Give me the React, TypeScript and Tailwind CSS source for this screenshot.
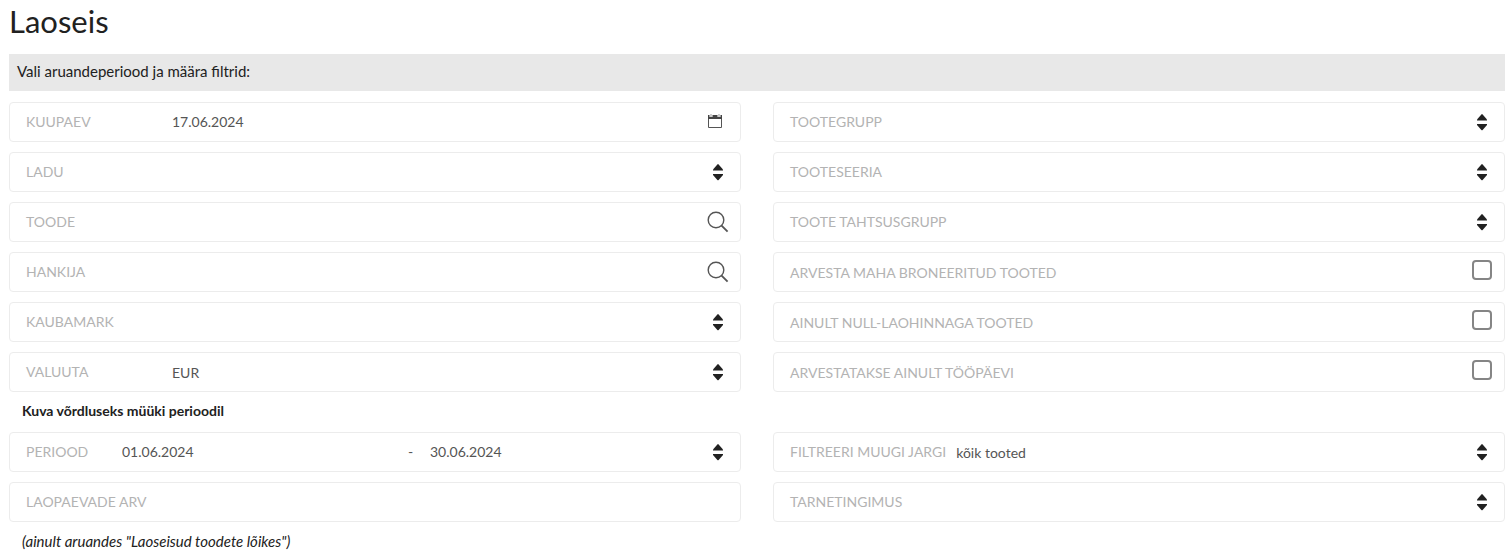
import { ReactNode, useState } from "react";

type FieldKind = "date" | "select" | "search" | "checkbox" | "text";

interface Field {
  id: string;
  label: string;
  kind: FieldKind;
  value?: string;
}

// Left and right column alternate, row by row
const FILTERS: Field[] = [
  { id: "date",         label: "KUUPAEV",                    kind: "date", value: "17.06.2024" },
  { id: "group",        label: "TOOTEGRUPP",                 kind: "select" },
  { id: "warehouse",    label: "LADU",                       kind: "select" },
  { id: "series",       label: "TOOTESEERIA",                kind: "select" },
  { id: "product",      label: "TOODE",                      kind: "search" },
  { id: "priority",     label: "TOOTE TAHTSUSGRUPP",         kind: "select" },
  { id: "supplier",     label: "HANKIJA",                    kind: "search" },
  { id: "reserved",     label: "ARVESTA MAHA BRONEERITUD TOOTED", kind: "checkbox" },
  { id: "brand",        label: "KAUBAMARK",                  kind: "select" },
  { id: "zeroPrice",    label: "AINULT NULL-LAOHINNAGA TOOTED", kind: "checkbox" },
  { id: "currency",     label: "VALUUTA",                    kind: "select", value: "EUR" },
  { id: "workdays",     label: "ARVESTATAKSE AINULT TÖÖPÄEVI", kind: "checkbox" },
];

function SortArrows() {
  return (
    <svg width="12" height="18" viewBox="0 0 12 18" className="shrink-0 pointer-events-none" fill="#212121" aria-hidden="true">
      <path d="M1 7.5 L1 6.5 L5.4 1.4 Q6 .8 6.6 1.4 L11 6.5 L11 7.5 Z" />
      <path d="M1 11 L1 12 L5.4 17 Q6 17.6 6.6 17 L11 12 L11 11 Z" />
    </svg>
  );
}

function CalendarIcon() {
  return (
    <svg width="16" height="16" viewBox="0 0 16 16" fill="none" aria-hidden="true">
      <path d="M1.5 2.5h13v12h-13z" stroke="#555" />
      <path d="M1 2h14v4H1z" fill="#444" />
      <path d="M4 0v4M12 0v4" stroke="#fff" strokeWidth="3" />
      <path d="M4 1v3M12 1v3" stroke="#999" />
    </svg>
  );
}

function SearchIcon() {
  return (
    <svg width="22" height="22" viewBox="0 0 22 22" fill="none" stroke="#555" aria-hidden="true">
      <circle cx="9" cy="9" r="7.8" strokeWidth="1.4" />
      <path d="M14.6 14.6 L20.6 20.6" strokeWidth="1.8" />
    </svg>
  );
}

function Row({ children }: { children: ReactNode }) {
  return (
    <div className="flex items-center h-10 px-4 border border-[#ececec] rounded">
      {children}
    </div>
  );
}

function Label({ id, text, narrow }: { id: string; text: string; narrow?: boolean }) {
  return (
    <label
      htmlFor={id}
      className={`shrink-0 pb-0.5 whitespace-nowrap text-[#b3b3b3] ${
        narrow ? "w-24" : "min-w-[146px] pr-2.5"
      }`}
    >
      {text}
    </label>
  );
}

const control = "flex-1 min-w-0 h-8 bg-transparent text-[#555] outline-none";

function SelectField({ id, label, value = "" }: { id: string; label: string; value?: string }) {
  return (
    <Row>
      <Label id={id} text={label} />
      <select id={id} defaultValue={value} className={`${control} appearance-none`}>
        <option value={value}>{value}</option>
      </select>
      <SortArrows />
    </Row>
  );
}

function CheckboxField({ id, label }: { id: string; label: string }) {
  const [checked, setChecked] = useState(false);
  return (
    <Row>
      <label htmlFor={id} className="flex-1 text-[#b3b3b3]">{label}</label>
      <input
        id={id}
        type="checkbox"
        checked={checked}
        onChange={(e) => setChecked(e.target.checked)}
        className="appearance-none size-5 -mr-1 mb-1 border-2 border-[#858585] rounded checked:bg-[#555]"
      />
    </Row>
  );
}

function FilterField({ id, label, kind, value }: Field) {
  if (kind === "select") return <SelectField id={id} label={label} value={value} />;
  if (kind === "checkbox") return <CheckboxField id={id} label={label} />;
  return (
    <Row>
      <Label id={id} text={label} />
      <input id={id} type="text" defaultValue={value} className={`${control} pb-0.5`} />
      {kind === "date" && (
        <button type="button" aria-label="Vali kuupäev" className="shrink-0 mr-px mb-0.5">
          <CalendarIcon />
        </button>
      )}
      {kind === "search" && (
        <button type="button" aria-label="Otsi" className="shrink-0 -mr-[5px]">
          <SearchIcon />
        </button>
      )}
    </Row>
  );
}

function PeriodField() {
  return (
    <Row>
      <Label id="periodStart" text="PERIOOD" narrow />
      <input id="periodStart" type="text" defaultValue="01.06.2024" className={`${control} pb-0.5`} />
      <span className="w-[26px] pl-1 pb-0.5 text-[#555]">-</span>
      <input type="text" aria-label="Perioodi lõpp" defaultValue="30.06.2024" className={`${control} pb-0.5`} />
      <button type="button" aria-label="Vali periood" className="shrink-0">
        <SortArrows />
      </button>
    </Row>
  );
}

export default function App() {
  return (
    <main className="pl-[9px] pr-1 pb-1 bg-white text-[#212121] text-[14px] font-['Lato','Liberation_Sans',sans-serif]">
      <h1 className="pt-0.5 pb-3.5 text-[31px] leading-[38px]">Laoseis</h1>
      <div className="px-2 pb-0.5 bg-[#e8e8e8] text-[15px] leading-[35px]">
        Vali aruandeperiood ja määra filtrid:
      </div>

      <form className="pt-[11px]">
        <div className="grid grid-cols-2 gap-x-8 gap-y-2.5">
          {FILTERS.map((f) => (
            <FilterField key={f.id} {...f} />
          ))}
        </div>

        {/* Sales comparison */}
        <h2 className="px-[13px] pb-0.5 leading-[38px] font-bold">Kuva võrdluseks müüki perioodil</h2>
        <div className="grid grid-cols-2 gap-x-8 gap-y-2.5">
          <PeriodField />
          <SelectField id="salesFilter" label="FILTREERI MUUGI JARGI" value="kõik tooted" />
          <FilterField id="stockDays" label="LAOPAEVADE ARV" kind="text" />
          <SelectField id="terms" label="TARNETINGIMUS" />
        </div>
        <p className="px-[13px] text-[15px] leading-[38px] italic">(ainult aruandes "Laoseisud toodete lõikes")</p>
      </form>
    </main>
  );
}
